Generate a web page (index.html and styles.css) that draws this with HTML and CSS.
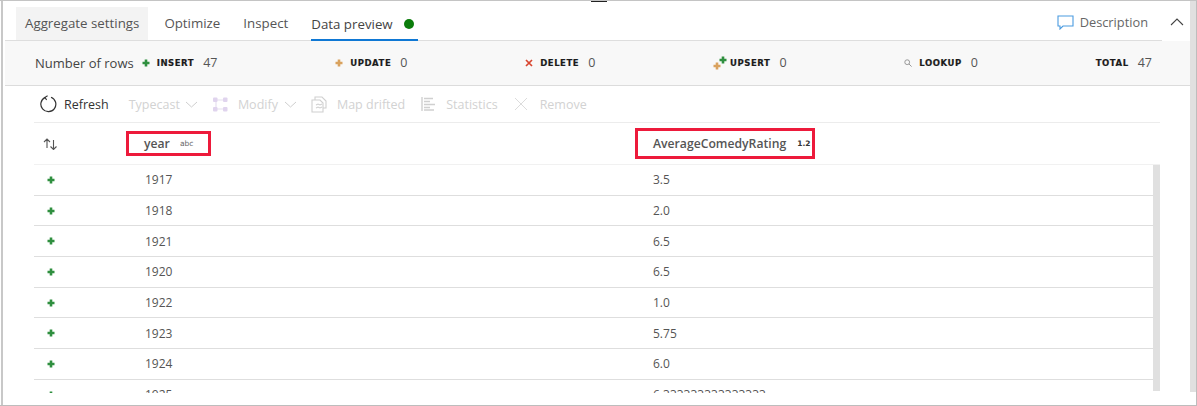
FILE: index.html
```html
<!DOCTYPE html>
<html lang="en">
<head>
<meta charset="utf-8">
<title>Data preview</title>
<link rel="stylesheet" href="styles.css">
</head>
<body>
<svg class="defs" width="0" height="0" aria-hidden="true">
  <symbol id="plus" viewBox="0 0 8 8"><path d="M2.700 0.500h2.600v2.200h2.200v2.600H5.300v2.200H2.700V5.300H0.500V2.700h2.200Z"/></symbol>
</svg>
<div class="frame">
  <span class="top-mark"></span>
  <div class="main">
    <div class="tabs">
      <div class="tab tab-active">Aggregate settings</div>
      <div class="tab tab-optimize">Optimize</div>
      <div class="tab">Inspect</div>
      <div class="tab tab-preview">Data preview <span class="dot"></span></div>
      <div class="tab-right">
        <svg class="desc-icon" width="17" height="15" viewBox="0 0 17 15"><path d="M1 1h15v10H6l-3 3v-3H1Z" fill="none" stroke="#4a9be0" stroke-width="1.100"/></svg>
        <span class="desc">Description</span>
        <svg class="chev-up" width="14" height="8" viewBox="0 0 14 8"><path d="M1 7 7 1l6 6" fill="none" stroke="#444" stroke-width="1.100"/></svg>
      </div>
    </div>
    <div class="stats">
      <span class="stats-label">Number of rows</span>
      <div class="stats-items">
        <div class="stat">
          <svg class="ic ic-green" width="8" height="8"><use href="#plus"/></svg>
          <b>INSERT</b><span class="num">47</span>
        </div>
        <div class="stat">
          <svg class="ic ic-orange" width="8" height="8"><use href="#plus"/></svg>
          <b>UPDATE</b><span class="num">0</span>
        </div>
        <div class="stat">
          <svg width="8" height="8" viewBox="0 0 8 8"><path d="M1 1l6 6M7 1 1 7" stroke="#d8452f" stroke-width="1.700"/></svg>
          <b>DELETE</b><span class="num">0</span>
        </div>
        <div class="stat">
          <svg class="ic-upsert" width="14" height="14" viewBox="0 0 14 14"><use href="#plus" class="ic-green" x="6" y="0" width="8" height="8"/><use href="#plus" class="ic-orange" x="0" y="6" width="8" height="8"/></svg>
          <b>UPSERT</b><span class="num">0</span>
        </div>
        <div class="stat">
          <svg width="8" height="8" viewBox="0 0 8 8"><circle cx="3.200" cy="3.200" r="2.400" fill="none" stroke="#999"/><path d="M5 5l2.600 2.600" stroke="#999"/></svg>
          <b>LOOKUP</b><span class="num">0</span>
        </div>
        <div class="stat">
          <b>TOTAL</b><span class="num">47</span>
        </div>
      </div>
    </div>
    <div class="toolbar">
      <div class="refresh">
        <svg width="18" height="18" viewBox="0 0 18 18"><path d="M6.200 2.400A7.500 7.500 0 1 0 12 2.200" fill="none" stroke="#333" stroke-width="1.200"/><path d="M8.600 0.800 6 2.400l1.600 2.600" fill="none" stroke="#333" stroke-width="1.100"/></svg>
        <span>Refresh</span>
      </div>
      <div class="tool tool-typecast">Typecast
        <svg width="13" height="7" viewBox="0 0 13 7"><path d="M1 1l5.500 5L12 1" fill="none" stroke="#cfcfcf"/></svg>
      </div>
      <div class="tool tool-modify">
        <svg width="15" height="15" viewBox="0 0 15 15"><path d="M3 3h9M3 3v9h9" fill="none" stroke="#e6dff0" stroke-width="1.200"/><g fill="#e0d4ee"><rect x="0" y="0.500" width="4.500" height="4.500" rx="1"/><rect x="10" y="0.500" width="4.500" height="4.500" rx="1"/><rect x="0" y="10" width="4.500" height="4.500" rx="1"/><rect x="10" y="10" width="4.500" height="4.500" rx="1"/></g></svg>
        Modify
        <svg width="13" height="7" viewBox="0 0 13 7"><path d="M1 1l5.500 5L12 1" fill="none" stroke="#cfcfcf"/></svg>
      </div>
      <div class="tool tool-map">
        <svg width="16" height="17" viewBox="0 0 16 17"><path d="M4 4V1h7l4 4v7h-3M1 4h8l3 3v9H1Z M5 9l2-1 2 1 2-1M5 12l2-1 2 1 2-1" fill="none" stroke="#d0d0d0" stroke-width="1.100"/></svg>
        Map drifted
      </div>
      <div class="tool tool-stats">
        <svg width="15" height="14" viewBox="0 0 15 14"><path d="M1 0v14M3 1.500h9M3 4.500h6M3 7.500h11M3 10.500h6M3 13h10" fill="none" stroke="#d0d0d0" stroke-width="1.400"/></svg>
        Statistics
      </div>
      <div class="tool tool-remove">
        <svg width="14" height="14" viewBox="0 0 14 14"><path d="M1 1l12 12M13 1 1 13" stroke="#dcdcdc"/></svg>
        Remove
      </div>
    </div>
    <div class="grid">
      <div class="grid-head">
        <div class="col-flag">
          <svg width="15" height="12" viewBox="0 0 15 12"><path d="M4 10V1M1 4 4 1l3 3M10.500 2v9.500M7.500 8.500l3 3 3-3" fill="none" stroke="#555" stroke-width="1.100"/></svg>
        </div>
        <div class="col-year">
          <div class="mark mark-year"><span>year</span><small>abc</small></div>
        </div>
        <div class="col-rating">
          <div class="mark mark-rating"><span>AverageComedyRating</span><small class="small-num">1.2</small></div>
        </div>
      </div>
      <div class="grid-body">
        <div class="grid-rows">
          <div class="row"><div class="col-flag"><svg class="ic ic-green" width="8" height="8"><use href="#plus"/></svg></div><div class="cell-year">1917</div><div class="cell-rating">3.5</div></div>
          <div class="row"><div class="col-flag"><svg class="ic ic-green" width="8" height="8"><use href="#plus"/></svg></div><div class="cell-year">1918</div><div class="cell-rating">2.0</div></div>
          <div class="row"><div class="col-flag"><svg class="ic ic-green" width="8" height="8"><use href="#plus"/></svg></div><div class="cell-year">1921</div><div class="cell-rating">6.5</div></div>
          <div class="row"><div class="col-flag"><svg class="ic ic-green" width="8" height="8"><use href="#plus"/></svg></div><div class="cell-year">1920</div><div class="cell-rating">6.5</div></div>
          <div class="row"><div class="col-flag"><svg class="ic ic-green" width="8" height="8"><use href="#plus"/></svg></div><div class="cell-year">1922</div><div class="cell-rating">1.0</div></div>
          <div class="row"><div class="col-flag"><svg class="ic ic-green" width="8" height="8"><use href="#plus"/></svg></div><div class="cell-year">1923</div><div class="cell-rating">5.75</div></div>
          <div class="row"><div class="col-flag"><svg class="ic ic-green" width="8" height="8"><use href="#plus"/></svg></div><div class="cell-year">1924</div><div class="cell-rating">6.0</div></div>
          <div class="row"><div class="col-flag"><svg class="ic ic-green" width="8" height="8"><use href="#plus"/></svg></div><div class="cell-year">1925</div><div class="cell-rating">6.333333333333333</div></div>
        </div>
        <div class="inner-scroll"></div>
      </div>
    </div>
  </div>
  <div class="outer-scroll"></div>
</div>
</body>
</html>
```
FILE: styles.css
```css
* { box-sizing: border-box; }
html, body { margin: 0; padding: 0; background: #fff; }
body { font-family: "Open Sans", "Liberation Sans", sans-serif; font-size: 12.500px; color: #4a4a4a; }
.defs { display: block; height: 0; }
.frame {
  position: relative;
  display: flex;
  width: 1197px;
  height: 406px;
  padding-left: 1px;
  border-top: 1px solid #c4c4c4;
  border-right: 1px solid #bdbdbd;
  border-bottom: 1px solid #bdbdbd;
  overflow: hidden;
}
.top-mark { position: absolute; left: 591px; top: 0; width: 16px; height: 1px; background: #222; }
.main { width: 1189px; flex: none; border-left: 2px solid #c8c8c8; padding-left: 2px; }
.outer-scroll { width: 6px; height: 391px; background: #e0e0e0; }

.tabs { display: flex; align-items: flex-end; height: 40px; padding-left: 11px; border-bottom: 1px solid #dedede; margin-right: 28px; font-size: 13.300px; }
.tab { display: flex; align-items: center; height: 33px; padding: 0 9px 1px; margin-right: 5px; color: #555; }
.tab-active { background: #f3f3f3; margin-right: 7px; }
.tab-preview { gap: 11px; color: #444; height: 33px; margin-bottom: -1px; border-bottom: 2px solid #0f78d4; margin-left: 9px; margin-right: 0; padding: 0 4px 0 0; }
.dot { width: 10px; height: 10px; border-radius: 50%; background: #0b7d0b; }
.tab-right { display: flex; align-items: center; margin-left: auto; height: 33px; padding-bottom: 3px; margin-right: -22px; color: #666; }
.desc { margin-left: 6px; margin-right: 22px; font-size: 12.800px; }
.chev-up { flex: none; }

.stats { display: flex; align-items: center; height: 45px; padding-left: 30px; padding-right: 38px; background: #f8f8f8; border-bottom: 1px solid #dcdcdc; color: #444; }
.stats-label { font-size: 13px; margin-right: 8px; }
.stats-items { flex: 1; display: flex; justify-content: space-between; }
.stat { display: flex; align-items: center; height: 16px; }
.stat b { margin-left: 7px; font-family: "DejaVu Sans", sans-serif; font-weight: 700; font-size: 8.500px; letter-spacing: 0.550px; color: #1b1b1b; -webkit-text-stroke: 0.200px #1b1b1b; }
.stat b:first-child { margin-left: 0; }
.num { margin-left: 9px; font-size: 12.500px; color: #555; position: relative; top: -1px; }
.ic { fill: currentColor; }
.ic-green { color: #2f8f3f; fill: #2f8f3f; }
.ic-orange { color: #d9a25e; fill: #d9a25e; }
.ic-upsert { margin-right: -4px; }

.toolbar { display: flex; align-items: center; height: 37px; margin-left: 29px; margin-right: 30px; padding-left: 5px; border-bottom: 1px solid #ececec; color: #d2d2d2; }
.refresh { display: flex; align-items: center; gap: 7px; color: #333; font-weight: 500; margin-right: 20px; }
.tool { display: flex; align-items: center; gap: 10px; margin-right: 16px; }
.tool-typecast { gap: 5px; margin-right: 15px; }
.tool-modify { margin-right: 14px; }
.tool-modify svg:last-child { margin-left: -4px; }
.tool-remove { gap: 12px; }

.grid { margin-left: 29px; margin-right: 30px; }
.grid-head { display: flex; align-items: center; height: 42px; border-bottom: 1px solid #f1f1f1; font-weight: 600; font-size: 12.200px; color: #555; }
.col-flag { width: 92px; flex: none; padding-left: 9px; display: flex; align-items: center; }
.col-year { width: 509px; flex: none; }
.col-rating { flex: 1; }
.mark { display: inline-flex; align-items: center; border: 3px solid #ed1a3b; padding-left: 15px; }
.mark-year { width: 85px; height: 25px; }
.mark-rating { width: 180px; height: 31px; }
.mark small { margin-left: 10px; font-family: "DejaVu Sans", sans-serif; font-size: 7.500px; font-weight: 400; color: #666; }
.mark small.small-num { font-weight: 700; color: #333; margin-left: 11px; }

.grid-body { display: flex; height: 228px; overflow: hidden; }
.grid-rows { flex: 1; min-width: 0; }
.inner-scroll { flex: none; width: 7px; height: 226px; background: #e0e0e0; }
.row { display: flex; align-items: center; height: 30.700px; border-bottom: 1px solid #dedede; font-size: 12px; color: #555; }
.row .col-flag { padding-left: 13px; }
.cell-year { width: 509px; flex: none; padding-left: 19px; }
.cell-rating { flex: 1; padding-left: 18px; }
```
